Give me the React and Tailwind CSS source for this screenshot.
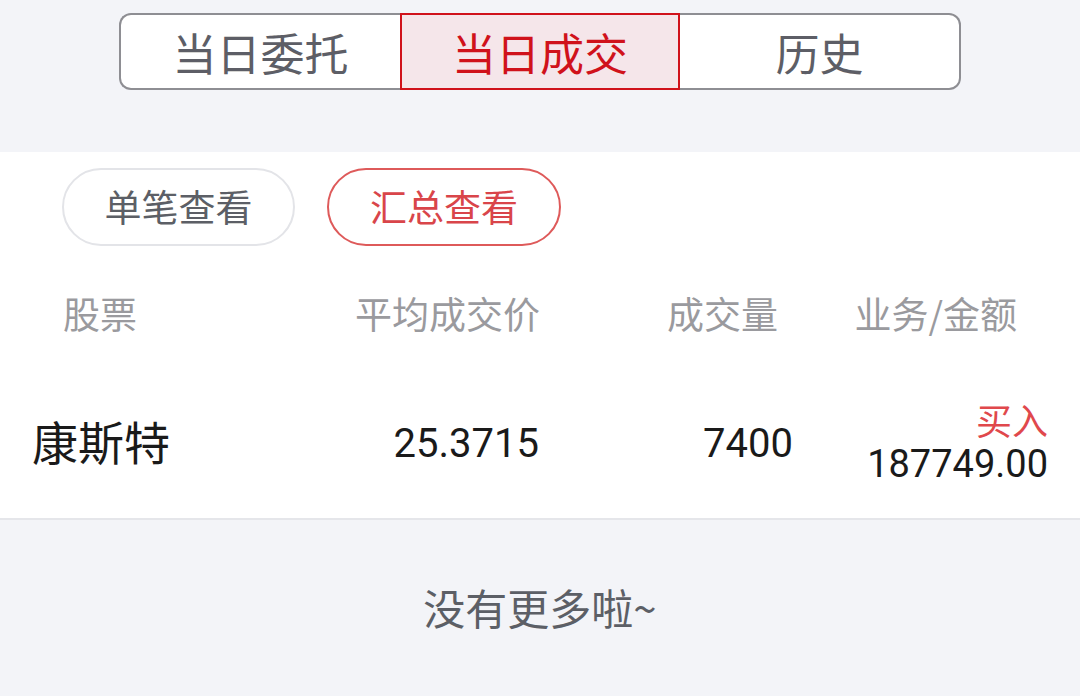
import React from 'react';

const cjk = { fontFamily: '"Noto Sans CJK SC", "Noto Sans", sans-serif' };
const num = { fontFamily: 'Roboto, "Noto Sans CJK SC", sans-serif' };

const Tabs = () => (
  <div className="flex justify-center pt-[13px]">
    <div className="flex h-[77px] w-[842px] text-[44px] leading-none">
      <div className="flex w-[281px] items-center justify-center rounded-l-[12px] border-2 border-r-0 border-[#8e8e93] bg-white text-[#5d5e66]">
        当日委托
      </div>
      <div className="flex w-[280px] items-center justify-center border-2 border-[#d0121b] bg-[#f5e6ea] text-[#d0121b]">
        当日成交
      </div>
      <div className="flex w-[281px] items-center justify-center rounded-r-[12px] border-2 border-l-0 border-[#8e8e93] bg-white text-[#5d5e66]">
        历史
      </div>
    </div>
  </div>
);

const App = () => {
  return (
    <div className="min-h-[696px] w-[1080px] bg-[#f3f4f8]" style={cjk}>
      <Tabs />
      <div className="mt-[62px] border-b-2 border-[#e5e6ea] bg-white">
        <div className="flex gap-[32px] pl-[62px] pt-[16px]">
          <div className="flex h-[78px] w-[233px] items-center justify-center rounded-full border-2 border-[#e3e4e8] text-[37px] text-[#5c5f66]">
            单笔查看
          </div>
          <div className="flex h-[78px] w-[234px] items-center justify-center rounded-full border-2 border-[#de5a5a] text-[37px] text-[#d9454a]">
            汇总查看
          </div>
        </div>

        <div className="mt-[20px] flex h-[96px] items-center text-[37px] text-[#9a9a9e]">
          <div className="w-[300px] pl-[63px]">股票</div>
          <div className="w-[240px] text-right">平均成交价</div>
          <div className="w-[238px] text-right">成交量</div>
          <div className="w-[239px] text-right">业务/金额</div>
        </div>

        <div className="flex h-[156px] items-center text-[#1a1a1a]">
          <div className="w-[300px] pl-[32px] text-[46px]">康斯特</div>
          <div className="w-[239px] pt-[8px] text-right text-[40px]" style={num}>25.3715</div>
          <div className="w-[254px] pt-[8px] text-right text-[40px]" style={num}>7400</div>
          <div className="flex w-[255px] flex-col items-end pt-[4px]">
            <span className="text-[36px] leading-[44px] text-[#e0484c]">买入</span>
            <span className="text-[38px] leading-[46px]" style={num}>187749.00</span>
          </div>
        </div>
      </div>

      <div className="pt-[63px] text-center text-[42px] leading-[48px] text-[#5c5f66]">
        没有更多啦~
      </div>
    </div>
  );
};

export default App;
